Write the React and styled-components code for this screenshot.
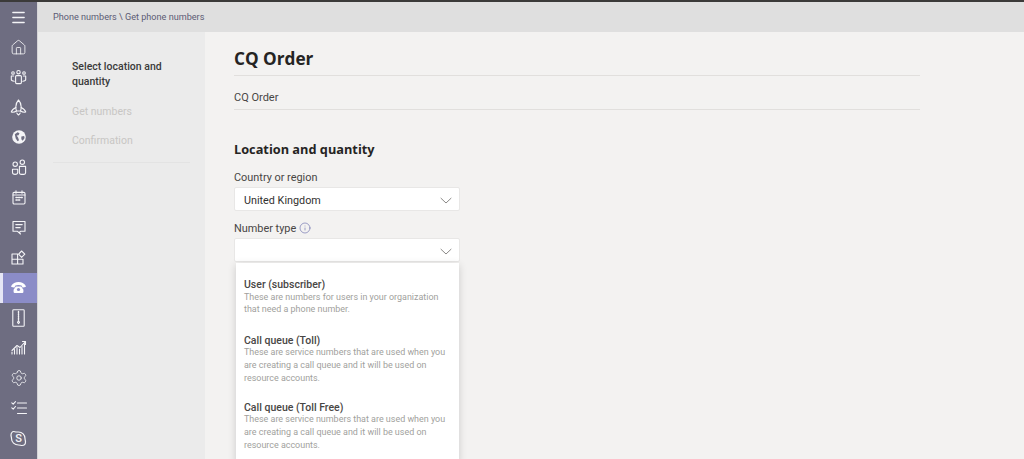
import React from 'react'
import styled, { createGlobalStyle } from 'styled-components'
import { Home, Menu, Settings, Info } from 'lucide-react'

const Global = createGlobalStyle`
  html, body { margin: 0; padding: 0; height: 100%; overflow: hidden; background: #f3f2f1; }
  * { box-sizing: border-box; }
  body { font-family: Roboto, "Open Sans", "Liberation Sans", sans-serif; }
`

const Page = styled.div`
  width: 1024px;
  height: 459px;
  display: flex;
  flex-direction: column;
  overflow: hidden;
  background: #f3f2f1;
`
const TopStrip = styled.div`
  height: 2px;
  flex: none;
  background: #3b3a39;
`
const Body = styled.div`
  flex: 1;
  display: flex;
  min-height: 0;
`
const Rail = styled.nav`
  width: 38px;
  flex: none;
  display: flex;
  flex-direction: column;
  background: #6e6d81;
  border-right: 1px solid #d6d5d8;
`
const RailItem = styled.div`
  height: ${p => (p.$menu ? 30 : 30.1)}px;
  flex: none;
  display: flex;
  align-items: center;
  justify-content: center;
  color: #f4f4f7;
  background: ${p => (p.$active ? '#8b8cc7' : 'transparent')};
  border-left: ${p => (p.$active ? '3px solid #e6e6f5' : '0')};
  padding-right: ${p => (p.$active ? '3px' : '0')};
`
const Content = styled.div`
  flex: 1;
  display: flex;
  flex-direction: column;
  min-width: 0;
`
const Header = styled.header`
  height: 30px;
  flex: none;
  padding-left: 15px;
  display: flex;
  align-items: center;
  background: #dfdfdf;
  font-size: 9.1px;
  color: #5c5b74;
`
const Columns = styled.div`
  flex: 1;
  display: flex;
  min-height: 0;
`
const Steps = styled.aside`
  width: 167px;
  flex: none;
  padding: 0 15px;
  background: #ebebeb;
`
const StepList = styled.div`
  padding: 27px 19px 14px;
  border-bottom: 1px solid #e3e3e3;
  display: flex;
  flex-direction: column;
  gap: 14.5px;
`
const Step = styled.div`
  font-size: 10.5px;
  line-height: 15px;
  font-weight: ${p => (p.$current ? 500 : 400)};
  color: ${p => (p.$current ? '#3a3a3a' : '#c8c6c4')};
`
const Main = styled.main`
  flex: 1;
  padding: 15px 104px 0 29px;
  min-width: 0;
`
const Title = styled.h1`
  margin: 0;
  height: 29px;
  font-family: "Open Sans", sans-serif;
  font-size: 17.2px;
  line-height: 23px;
  font-weight: 700;
  color: #252423;
  border-bottom: 1px solid #e1dfdd;
`
const NameRow = styled.div`
  height: 34px;
  padding-top: 9px;
  font-size: 11px;
  display: flex;
  align-items: center;
  color: #484644;
  border-bottom: 1px solid #e1dfdd;
`
const Section = styled.h2`
  margin: 30px 0 0;
  font-family: "Open Sans", sans-serif;
  font-size: 12.75px;
  line-height: 18px;
  font-weight: 700;
  color: #252423;
`
const Field = styled.div`
  width: 226px;
  display: flex;
  flex-direction: column;
`
const FieldLabel = styled.label`
  height: 18px;
  margin-top: ${p => p.$top}px;
  display: flex;
  align-items: center;
  gap: 3px;
  font-size: 10.9px;
  color: #484644;
`
const SelectBox = styled.div`
  height: 24px;
  margin-top: 1px;
  padding: 2px 7px 0 9px;
  display: flex;
  align-items: center;
  justify-content: space-between;
  background: #fff;
  border: 1px solid #e8e7e6;
  border-radius: 2px;
  font-size: 10.8px;
  color: #323130;
`
const Dropdown = styled.div`
  width: 223px;
  margin: 1px 0 0 2px;
  padding: 15px 8px 0;
  height: 200px;
  background: #fff;
  box-shadow: 0 2px 8px rgba(0, 0, 0, 0.16);
`
const Option = styled.div`
  margin-bottom: ${p => p.$gap}px;
`
const OptionTitle = styled.div`
  font-size: 10.5px;
  line-height: 13px;
  font-weight: 500;
  color: #484644;
`
const OptionText = styled.div`
  margin-top: -0.5px;
  font-size: 8.95px;
  line-height: 12.8px;
  color: #a19f9d;
`

const G = styled.svg.attrs({
  fill: 'none',
  stroke: 'currentColor',
  strokeWidth: 1.1,
  strokeLinecap: 'round',
  strokeLinejoin: 'round',
})`
  display: block;
`

const TeamsIcon = () => (
  <G width="17" height="17" viewBox="0 0 17 17">
    <circle cx="8.5" cy="3.2" r="1.7" />
    <circle cx="3" cy="4" r="1.3" />
    <circle cx="14" cy="4" r="1.3" />
    <rect x="5.6" y="6.6" width="5.8" height="8" rx="1" />
    <path d="M3.6 7H1.3v3.6c0 1 .8 1.6 2.900 1.600M13.400 7h2.300v3.600c0 1-.8 1.600-2.900 1.600" />
  </G>
)
const RocketIcon = () => (
  <G width="17" height="17" viewBox="0 0 17 17">
    <path d="M8.500 1C6.600 3 5.800 5.600 5.800 8c0 1.600.3 3 .7 4h4c.4-1 .7-2.400.7-4 0-2.400-.8-5-2.700-7z" />
    <path d="M5.900 8.500C3.500 9.600 1.700 11.300 1.300 13c1.500.5 3.400.2 5.200-1M11.100 8.500c2.400 1.100 4.200 2.800 4.600 4.500-1.500.5-3.400.2-5.200-1" />
    <path d="M6.800 14c.5.9 1 1.500 1.700 2 .7-.5 1.200-1.100 1.700-2" />
  </G>
)
const GlobeIcon = () => (
  <svg width="14" height="14" viewBox="0 0 15 15">
    <circle cx="7.500" cy="7.500" r="7.300" fill="#f4f4f7" />
    <path d="M3 4.500l3-2 2 1-1 2-2 .5 1.500 2 1 3-1.500 1-2-3zM10 7l3-.5.5 2-2 3-1.500-1.500z" fill="#6e6d81" />
  </svg>
)
const UsersIcon = () => (
  <G width="16" height="17" viewBox="0 0 16 17">
    <circle cx="4.200" cy="5.200" r="2.200" />
    <circle cx="11.300" cy="3.200" r="2.200" />
    <path d="M1.500 10.200h5.200v3.300c0 1-1 1.900-2.600 1.900s-2.600-.9-2.600-1.900z" />
    <path d="M8.400 7.400h6.200v6.400c0 1-.7 1.600-1.600 1.600H10c-.9 0-1.600-.6-1.600-1.600z" />
  </G>
)
const CalendarIcon = () => (
  <G width="14" height="15" viewBox="0 0 14 15">
    <rect x="1" y="2.400" width="12" height="11.600" rx="1.200" />
    <path d="M1 5h12M4 .8v2.400M10 .8v2.400" />
    <path d="M4 7.500h1.200M6.500 7.500h1.200M9 7.500h1.200M4 10h1.200M6.500 10h1.200" strokeWidth="1.500" />
  </G>
)
const NoteIcon = () => (
  <G width="14" height="15" viewBox="0 0 14 15">
    <path d="M1 1.500h12v9.800H8.500l-1 .9 1 1.800-3-2.700H1z" />
    <path d="M3.800 4.600h6.400M3.800 7.600h4.400" />
  </G>
)
const AppsIcon = () => (
  <G width="15" height="15" viewBox="0 0 15 15">
    <path d="M1 4h5.600v5.200H1zM1 9.200h5.600V14H1zM6.600 9.200H12V14H6.600z" />
    <path d="M7.600 4.200L10.600 1l3.200 3.200-3.200 3.200z" />
  </G>
)
const PhoneIcon = () => (
  <svg width="15" height="11" viewBox="0 0 15 11" fill="#fff">
    <path d="M.2 4C1.600 1.400 4.400 0 7.500 0s5.900 1.400 7.300 4c.2.500 0 .9-.4 1l-2.400.6c-.4 0-.7-.2-.8-.6l-.3-1.200C9.800 3.300 8.700 3.100 7.500 3.100s-2.300.2-3.400.7L3.800 5c-.1.4-.4.6-.8.6L.6 5C.2 4.900 0 4.500.2 4z" />
    <path d="M3.600 6.200L4.800 4.400h5.400l1.200 1.800 1 1.600V10a1 1 0 0 1-1 1H3.600a1 1 0 0 1-1-1V7.800z" />
    <circle cx="7.500" cy="7.500" r="1.600" fill="#8b8cc7" />
  </svg>
)
const BookIcon = () => (
  <G width="13" height="18" viewBox="0 0 13 18">
    <rect x=".8" y=".8" width="11.400" height="16.400" rx=".8" />
    <path d="M6.500 2.500v8" strokeWidth="1.400" strokeDasharray="1.300 .9" />
    <path d="M6.500 11.500l-1 2 1 1.200 1-1.200z" />
  </G>
)
const ChartIcon = () => (
  <G width="16" height="15" viewBox="0 0 16 15" strokeWidth="1">
    <path d="M1 14v-2M3.500 14V9.500M6 14V7.500M8.500 14V9M11 14V6.500M13.500 14V3.500" />
    <path d="M1 10.500L6 5.500l3 2 5-5.500" />
    <path d="M11.500 1.500H14.500v3" />
  </G>
)
const TasksIcon = () => (
  <G width="16" height="14" viewBox="0 0 16 14" strokeWidth="1">
    <path d="M6.500 2h9M6.500 7h9M6.500 12.500h9" />
    <path d="M.8 1.800l1.400 1.300L4.500 .6M.8 6.800l1.400 1.300 2.300-2.600" />
  </G>
)
const SkypeIcon = () => (
  <svg width="17" height="17" viewBox="0 0 17 17">
    <path d="M3.500 1.500c1.200 0 1.700.5 3 .5h2c3.700 0 6.500 2.800 6.500 6.500 0 1.300.5 2 .5 3.500 0 2-1.500 3.500-3.500 3.500-1.300 0-2-.5-3.500-.5-3.900 0-7-2.900-7-6.500 0-1.400-.5-1.800-.5-3.500 0-2 1.500-3.500 2.500-3.500z" fill="none" stroke="#f4f4f7" strokeWidth="1.200" />
    <text x="8.500" y="12.200" textAnchor="middle" fontSize="11" fontWeight="500" fill="#f4f4f7" fontFamily="Roboto, sans-serif">S</text>
  </svg>
)
const ChevronIcon = () => (
  <svg width="12" height="7" viewBox="0 0 12 7" fill="none" stroke="#8a8886" strokeWidth="1">
    <path d="M.7 1l5.300 5 5.300-5" />
  </svg>
)

const railIcons = [
  <Home key="home" size={17} strokeWidth={1.2} />,
  <TeamsIcon key="teams" />,
  <RocketIcon key="rocket" />,
  <GlobeIcon key="globe" />,
  <UsersIcon key="users" />,
  <CalendarIcon key="calendar" />,
  <NoteIcon key="note" />,
  <AppsIcon key="apps" />,
  <PhoneIcon key="phone" />,
  <BookIcon key="book" />,
  <ChartIcon key="chart" />,
  <Settings key="settings" size={18} strokeWidth={1.1} />,
  <TasksIcon key="tasks" />,
  <SkypeIcon key="skype" />,
]

const options = [
  { title: 'User (subscriber)', text: 'These are numbers for users in your organization that need a phone number.', gap: 17.9 },
  { title: 'Call queue (Toll)', text: 'These are service numbers that are used when you are creating a call queue and it will be used on resource accounts.', gap: 16.1 },
  { title: 'Call queue (Toll Free)', text: 'These are service numbers that are used when you are creating a call queue and it will be used on resource accounts.', gap: 0 },
]

export default function App() {
  return (
    <Page>
      <Global />
      <TopStrip />
      <Body>
        <Rail>
          <RailItem $menu><Menu size={17} strokeWidth={1.9} /></RailItem>
          {railIcons.map((icon, i) => (
            <RailItem key={i} $active={i === 8}>{icon}</RailItem>
          ))}
        </Rail>
        <Content>
          <Header>Phone numbers \ Get phone numbers</Header>
          <Columns>
            <Steps>
              <StepList>
                <Step $current>Select location and quantity</Step>
                <Step>Get numbers</Step>
                <Step>Confirmation</Step>
              </StepList>
            </Steps>
            <Main>
              <Title>CQ Order</Title>
              <NameRow>CQ Order</NameRow>
              <Section>Location and quantity</Section>
              <Field>
                <FieldLabel $top={10}>Country or region</FieldLabel>
                <SelectBox>United Kingdom<ChevronIcon /></SelectBox>
                <FieldLabel $top={8}>
                  Number type <Info size={12} strokeWidth={1.2} color="#6264a7" />
                </FieldLabel>
                <SelectBox><span /><ChevronIcon /></SelectBox>
                <Dropdown>
                  {options.map(o => (
                    <Option key={o.title} $gap={o.gap}>
                      <OptionTitle>{o.title}</OptionTitle>
                      <OptionText>{o.text}</OptionText>
                    </Option>
                  ))}
                </Dropdown>
              </Field>
            </Main>
          </Columns>
        </Content>
      </Body>
    </Page>
  )
}
